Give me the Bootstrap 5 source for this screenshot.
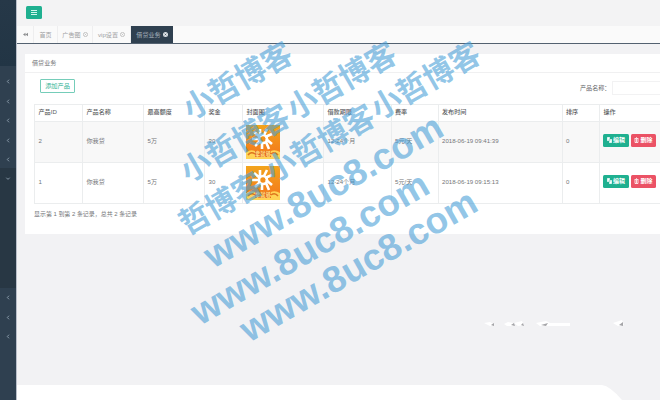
<!DOCTYPE html>
<html lang="zh-CN">
<head>
<meta charset="utf-8">
<meta name="viewport" content="width=device-width, initial-scale=1">
<title>借贷业务</title>
<link href="https://cdn.jsdelivr.net/npm/bootstrap@5.3.0/dist/css/bootstrap.min.css" rel="stylesheet">
<style>
html,body{height:400px;overflow:hidden}
body{font-family:"Liberation Sans","Noto Sans CJK SC",sans-serif;font-size:6.1px;line-height:8px;color:#747678;background:#f2f2f4}
.side{width:17px;flex:none;background:#2f4050;border-right:1px solid #b9bfca}
.side-head{height:66px;background:linear-gradient(#263848,#223545)}
.side-set{height:102px;padding-top:6px}
.side-open{height:120px;background:#283744;padding-top:1px}
.side-item{height:19.5px;display:flex;align-items:center;justify-content:center}
.side-item svg{width:4px;height:5px;flex:none;overflow:visible;fill:none;stroke:#8fa0b0;stroke-width:.9}
.topline{height:26px;padding:6px 0 0 9px;flex:none;background:#f3f3f4}
.btn-x{background:#1fb090;color:#fff;border:0;border-radius:1.5px;padding:0;line-height:1;display:inline-flex;align-items:center;justify-content:center}
.burger{width:16px;height:13px}
.tabs-row{height:18px;flex:none;background:#fafafa;border-bottom:1px solid #536170}
.tab-x{height:17px;display:flex;align-items:center;justify-content:center;gap:2px;color:#a0a1a3;border-right:1px solid #eeeeef}
.tab-x svg{width:5px;height:5px}
.tab-on{background:#2f4050;color:#a3afba;border-right:0}
.t0{width:17px}.t1{width:24px}.t2{width:35px}.t3{width:38px}.t4{width:42px}
.panel{margin:10px 0 0 8px;height:180px;background:#fff;flex:none;border-radius:0;border:0}
.panel-title{height:19px;padding:5px 7px;border-bottom:1px solid #f0f0f1}
.tools{height:31px;padding:6px 0 0 15px}
.add-btn{width:35px;height:14px;border:1px solid #75cdb9;border-radius:1px;color:#32b396;background:#fff;padding:0;font-size:6.2px;line-height:1}
.find{width:80px;gap:2px;color:#66686a;padding-top:2px}
.find-in{width:60px;height:14px;min-height:0;border:1px solid #f2f2f3;border-radius:0;padding:0;background:#fff}
.grid-x{width:640px;margin:0 0 0 9px;table-layout:fixed;font-size:6.1px;border-color:#ebedee;--bs-table-color:#747678;--bs-table-bg:transparent}
.grid-x>:not(caption)>*>*{padding:0 0 0 3.5px;vertical-align:middle;white-space:nowrap;color:#747678;line-height:8px}
.grid-x>thead>tr>th{height:17px;padding-bottom:2px;font-weight:500;color:#5a5c5e}
.grid-x>tbody>tr>td{height:41px;padding-bottom:1.5px}
.grid-x>tbody>tr:first-child>td{background:#f8f8f8}
.grid-x>tbody>tr>.pic{padding-left:3px;padding-bottom:0}
.grid-x>tbody>tr>td:last-child{padding-left:3px;padding-bottom:4px}
.pair{gap:2px}
.act{width:26px;height:13px;font-size:6px;gap:1px;font-weight:700}
.act svg{width:5px;height:6px}
.act-del{background:#eb5265;width:25px}
.info{padding:5px 0 0 9px;font-size:6.1px}
.foot{height:15px;flex:none}
.overlay{position:absolute;left:0;top:0;width:660px;height:400px;pointer-events:none}
</style>
<script src="https://cdn.jsdelivr.net/npm/bootstrap@5.3.0/dist/js/bootstrap.bundle.min.js"></script>
</head>
<body>
<div class="d-flex h-100 position-relative overflow-hidden">
  <aside class="side">
    <div class="side-head"></div>
    <div class="side-set">
      <div class="side-item"><svg viewBox="0 0 4 5"><path d="M3 .7 1.3 2.5 3 4.3"/></svg></div>
      <div class="side-item"><svg viewBox="0 0 4 5"><path d="M3 .7 1.3 2.5 3 4.3"/></svg></div>
      <div class="side-item"><svg viewBox="0 0 4 5"><path d="M3 .7 1.3 2.5 3 4.3"/></svg></div>
      <div class="side-item"><svg viewBox="0 0 4 5"><path d="M3 .7 1.3 2.5 3 4.3"/></svg></div>
      <div class="side-item"><svg viewBox="0 0 4 5"><path d="M3 .7 1.3 2.5 3 4.3"/></svg></div>
    </div>
    <div class="side-open"><div class="side-item"><svg viewBox="0 0 4 5"><path d="M.3 1.7 2 3.4 3.7 1.7"/></svg></div></div>
    <div>
      <div class="side-item"><svg viewBox="0 0 4 5"><path d="M3 .7 1.3 2.5 3 4.3"/></svg></div>
      <div class="side-item"><svg viewBox="0 0 4 5"><path d="M3 .7 1.3 2.5 3 4.3"/></svg></div>
      <div class="side-item"><svg viewBox="0 0 4 5"><path d="M3 .7 1.3 2.5 3 4.3"/></svg></div>
    </div>
  </aside>
  <main class="d-flex flex-column flex-grow-1 overflow-hidden">
    <div class="topline"><button class="btn-x burger" aria-label="菜单"><svg width="6" height="5" viewBox="0 0 6 5"><path d="M0 .5h6M0 2.5h6M0 4.5h6" stroke="#e4fff7" stroke-width=".9"/></svg></button></div>
    <nav class="tabs-row d-flex">
      <div class="tab-x t0"><svg viewBox="0 0 6 6"><path d="M3 1v4L0 3zM6 1v4L3 3z" fill="#8c8e90"/></svg></div>
      <div class="tab-x t1">首页</div>
      <div class="tab-x t2">广告图<svg viewBox="0 0 6 6"><circle cx="3" cy="3" r="2.5" fill="none" stroke="#bbb"/><path d="m2 2 2 2m0-2L2 4" stroke="#bbb" stroke-width=".7"/></svg></div>
      <div class="tab-x t3">vip设置<svg viewBox="0 0 6 6"><circle cx="3" cy="3" r="2.5" fill="none" stroke="#bbb"/><path d="m2 2 2 2m0-2L2 4" stroke="#bbb" stroke-width=".7"/></svg></div>
      <div class="tab-x t4 tab-on">借贷业务<svg viewBox="0 0 6 6"><circle cx="3" cy="3" r="3" fill="#dce1e6"/><path d="m2 2 2 2m0-2L2 4" stroke="#2f4050" stroke-width=".7"/></svg></div>
    </nav>
    <section class="panel card">
      <div class="panel-title">借贷业务</div>
      <div class="tools d-flex justify-content-between align-items-start">
        <button class="add-btn">添加产品</button>
        <div class="find d-flex align-items-center"><span class="text-nowrap">产品名称：</span><input class="find-in form-control flex-shrink-0" aria-label="产品名称"></div>
      </div>
      <table class="grid-x table table-bordered">
        <colgroup><col style="width:48px"><col style="width:61px"><col style="width:61px"><col style="width:38px"><col style="width:81px"><col style="width:67.5px"><col style="width:47px"><col style="width:124px"><col style="width:37.5px"><col></colgroup>
        <thead><tr><th>产品ID</th><th>产品名称</th><th>最高额度</th><th>奖金</th><th>封面图</th><th>借款期限</th><th>费率</th><th>发布时间</th><th>排序</th><th>操作</th></tr></thead>
        <tbody>
          <tr><td>2</td><td>你我贷</td><td>5万</td><td>30</td><td class="pic">
            <svg class="d-block" width="34" height="34" viewBox="0 0 34 34"><defs><linearGradient id="og" x2="0" y2="1"><stop stop-color="#f2a41c"/><stop offset="1" stop-color="#f4741c"/></linearGradient>
            <symbol id="promo" viewBox="0 0 34 34"><path d="M0 0h34v34H0z" fill="url(#og)"/><path d="M0 27q5-3 9-1h16q4-2 9 1v7H0z" fill="#ffd355"/><path d="M2 30q3-4 7-1M25 29q4-3 7 1" stroke="#dd771f" stroke-width="1.5" fill="none"/><g stroke="#fff" stroke-width="2.6" fill="none"><path d="M14 4v6M21 4l-3 6M8 7l6 5M26 9l-7 3M6 14h7M20 14l6 5M9 21l5-5M20 17l3 7M16 18v6"/><circle cx="17" cy="14" r="4"/></g><path d="M9 26h16v6H9z" fill="#e2601f"/></symbol></defs><use href="#promo"/><text x="17" y="31.3" text-anchor="middle" font-size="5.3" font-weight="700" fill="#ffe282">拿就够</text></svg></td>
            <td>12-24个月</td><td>5元/天</td><td>2018-06-19 09:41:39</td><td>0</td><td><div class="d-flex pair"><button class="btn-x act"><svg viewBox="0 0 5 6"><path d="M0 0h3v4H0zM2 2h3v4H2z" fill="#fff" stroke="#1fb090" stroke-width=".3"/></svg>编辑</button><button class="btn-x act act-del"><svg viewBox="0 0 5 6"><path d="M.5 1.5h4M1 2v3.5h3V2M2 .7h1M2.5 2v3" fill="none" stroke="#fff" stroke-width=".8"/></svg>删除</button></div></td></tr>
          <tr><td>1</td><td>你我贷</td><td>5万</td><td>30</td><td class="pic"><svg class="d-block" width="34" height="34" viewBox="0 0 34 34"><use href="#promo"/><text x="17" y="31.3" text-anchor="middle" font-size="5.3" font-weight="700" fill="#ffe282">拿就够</text></svg></td>
            <td>12-24个月</td><td>5元/天</td><td>2018-06-19 09:15:13</td><td>0</td><td><div class="d-flex pair"><button class="btn-x act"><svg viewBox="0 0 5 6"><path d="M0 0h3v4H0zM2 2h3v4H2z" fill="#fff" stroke="#1fb090" stroke-width=".3"/></svg>编辑</button><button class="btn-x act act-del"><svg viewBox="0 0 5 6"><path d="M.5 1.5h4M1 2v3.5h3V2M2 .7h1M2.5 2v3" fill="none" stroke="#fff" stroke-width=".8"/></svg>删除</button></div></td></tr>
        </tbody>
      </table>
      <div class="info"><svg class="d-block" width="110" height="9" fill="#747678"><text x="0" y="6.5" font-size="6" textLength="103" lengthAdjust="spacingAndGlyphs">显示第 1 到第 2 条记录，总共 2 条记录</text></svg></div>
    </section>
    <div class="flex-grow-1"></div>
    <svg class="foot" width="643" height="15" viewBox="0 0 643 15"><path d="M0 0h585q8 1 20 15H0z" fill="#fff"/></svg>
  </main>
  <svg class="overlay" viewBox="0 0 660 400">
    <!-- faint light streaks near the lower right -->
    <path fill="#fff" d="M484 323l6-1 5 3-5 1zM504 324l4-2 5 1v3h-6zM514 323l8-2 2 4-6 1zM536 323l10-2 4 2h20v3h-30zM613 323l9-3 2 5-6 1z"/>
    <path d="M491 325l3-2v3zM511 325l3-2 1 3zM521 325l2-2 1 3zM541 325l7-2-2 3zM619 325l4-3v4z" fill="#a5a5a8"/>
    <g fill="#4a9fd7" fill-opacity=".6" font-family="Liberation Sans, Noto Sans CJK SC, sans-serif" font-weight="700">
      <g font-size="30.5">
        <text transform="translate(190.5 120.5) rotate(-30)" textLength="121">小哲博客</text>
        <text transform="translate(294.5 120.5) rotate(-30)" textLength="121">小哲博客</text>
        <text transform="translate(378.5 120.5) rotate(-30)" textLength="121">小哲博客</text>
        <text transform="translate(188 183) rotate(-30)" textLength="121">小哲博客</text>
        <text transform="translate(273 183) rotate(-30)" textLength="121">小哲博客</text>
        <text transform="translate(187 235.5) rotate(-30)" textLength="91">哲博客</text>
      </g>
      <g font-size="37">
        <text transform="translate(213 269) rotate(-30)" textLength="269">www.8uc8.com</text>
        <text transform="translate(200 326) rotate(-30)" textLength="268">www.8uc8.com</text>
        <text transform="translate(249 343) rotate(-30)" textLength="267">www.8uc8.com</text>
      </g>
    </g>
  </svg>
</div>
</body>
</html>
